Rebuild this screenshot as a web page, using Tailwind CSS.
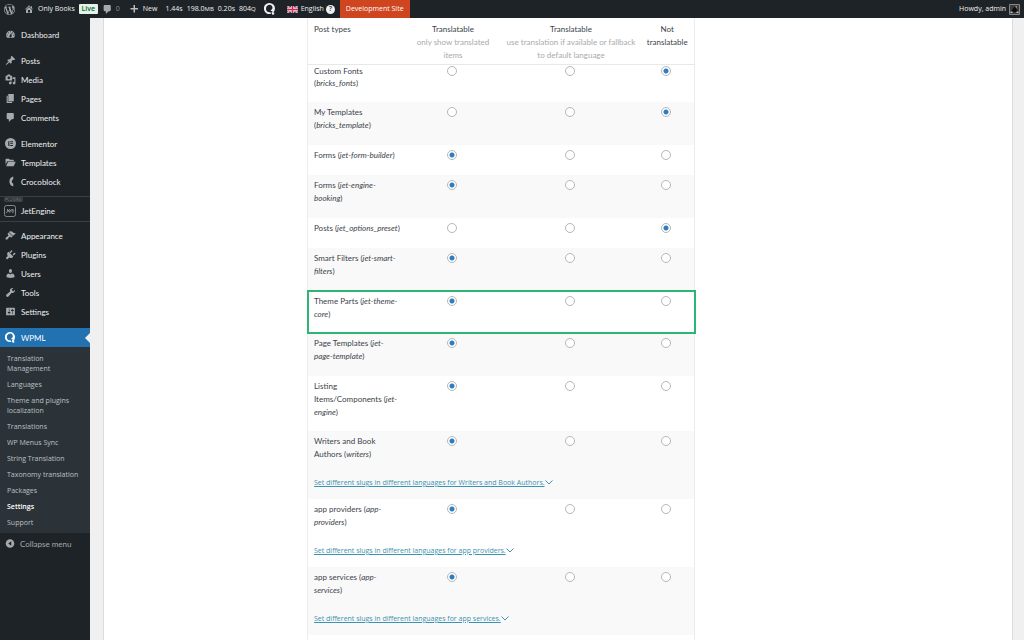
<!DOCTYPE html>
<html lang="en">
<head>
<meta charset="utf-8">
<title>WPML Settings</title>
<script src="https://cdn.jsdelivr.net/npm/@tailwindcss/browser@4"></script>
</head>
<body class="flex h-screen flex-col overflow-hidden bg-[#f0f0f1] font-['Open_Sans','Noto_Sans',sans-serif] text-[7px] text-[#3c434a]">

<!-- Admin bar -->
<header class="flex h-[18px] shrink-0 items-center bg-[#1d2327] text-[#f0f0f1]">
  <a href="#" aria-label="About WordPress" class="ml-1 text-[#a7aaad]"><svg class="size-[11px]" viewBox="0 0 20 20" fill="currentColor"><path d="M20 10c0-5.51-4.49-10-10-10C4.48 0 0 4.49 0 10c0 5.52 4.48 10 10 10 5.51 0 10-4.48 10-10zM7.78 15.37L4.37 6.22c.55-.02 1.17-.08 1.17-.08.5-.06.44-1.13-.06-1.11 0 0-1.45.11-2.37.11-.18 0-.37 0-.58-.01C4.12 2.69 6.87 1.11 10 1.11c2.33 0 4.45.87 6.05 2.34-.68-.11-1.65.39-1.65 1.58 0 .74.45 1.36.9 2.1.35.61.55 1.36.55 2.46 0 1.49-1.4 5-1.4 5l-3.03-8.37c.54-.02.82-.17.82-.17.5-.05.44-1.25-.06-1.22 0 0-1.44.12-2.38.12-.87 0-2.33-.12-2.33-.12-.5-.03-.56 1.2-.06 1.22l.92.08 1.26 3.41zM17.41 10c.24-.64.74-1.87.43-4.25.7 1.29 1.05 2.71 1.05 4.25 0 3.29-1.73 6.24-4.4 7.78.97-2.59 1.94-5.2 2.92-7.78zM6.1 18.09C3.12 16.65 1.11 13.53 1.11 10c0-1.3.23-2.48.72-3.59C3.25 10.3 4.67 14.2 6.1 18.09zm4.03-6.63l2.58 6.98c-.86.29-1.76.45-2.71.45-.79 0-1.57-.11-2.29-.33.81-2.38 1.62-4.74 2.42-7.1z"/></svg></a>
  <a href="#" class="ml-[9px] flex items-center gap-1"><svg class="size-[10px] text-[#a7aaad]" viewBox="0 0 20 20" fill="currentColor"><path d="M16 8.5l1.53 1.53-1.06 1.06L10 4.6l-6.47 6.49-1.06-1.06L10 2.5l4 4v-2h2v4zm-6-2.46l6 5.99V18H4v-5.97zM12 17v-5H8v5h4z"/></svg>Only Books</a>
  <span class="ml-1 flex h-[10px] w-[19px] items-center justify-center rounded-[1px] bg-[#e6f2e8] font-semibold text-[#00702c]">Live</span>
  <a href="#" class="ml-1 flex items-center gap-[3px] text-[#a7aaad]"><svg class="size-[11px]" viewBox="0 0 20 20" fill="currentColor"><path d="M5 2h9c1.1 0 2 .9 2 2v7c0 1.1-.9 2-2 2h-2l-5 5v-5H5c-1.100 0-2-.9-2-2V4c0-1.1.9-2 2-2z"/></svg><span class="text-[#8c8f94]">0</span></a>
  <a href="#" class="ml-[9px] flex items-center gap-1"><svg class="size-[10px] text-[#b9bcbf]" viewBox="0 0 20 20" fill="currentColor"><path d="M18 8v3h-6v6H9v-6H3V8h6V2h3v6z"/></svg>New</a>
  <a href="#" class="ml-2 flex items-baseline gap-1"><span>1.44s</span><span>198.0<span class="text-[6px]">MB</span></span><span>0.20s</span><span>804<span class="text-[6px]">Q</span></span></a>
  <a href="#" aria-label="WPML" class="ml-[8px]"><svg class="size-[12px]" viewBox="0 0 24 24" fill="#f0f0f1"><path fill-rule="evenodd" d="M11 0a11 11 0 1 0 3 21.500l-1-3Q5 19.500 4 12 4 4.500 11 3.500q6 .5 6 6.500 0 3-4 4.500 2 2.500 5 1.500-1.500 2-3 2.500l1.500 2.500Q22 17.500 22 11A11 11 0 0 0 11 0z"/><circle cx="18" cy="21" r="2.500"/></svg></a>
  <a href="#" class="ml-[11px] flex items-center gap-[2px]"><svg class="mr-[1px] h-[7px] w-[11px]" viewBox="0 0 22 14"><path fill="#233a8e" d="M0 0h22v14H0z"/><path stroke="#fff" stroke-width="3" d="m0 0 22 14M22 0 0 14"/><path stroke="#d22c45" stroke-width="1.500" d="m0 0 22 14M22 0 0 14"/><path stroke="#fff" stroke-width="5" d="M11 0v14M0 7h22"/><path stroke="#d22c45" stroke-width="3" d="M11 0v14M0 7h22"/></svg>English<span class="flex size-[9px] items-center justify-center rounded-full bg-[#f0f0f1] font-bold text-[#50575e]">?</span></a>
  <a href="#" class="ml-[5px] flex h-full items-center bg-[#cf4520] px-[6px] text-white">Development Site</a>
  <a href="#" class="mr-1 ml-auto flex items-center gap-[3px]">Howdy, admin<svg class="size-[11px]" viewBox="0 0 22 22"><path fill="#3a3c3f" stroke="#85888b" stroke-width="2" d="M1 1h20v20H1z"/><path fill="#0c0c0c" d="m3 16 8-11 8 11z"/><path fill="#b88a6c" d="M12 4h4v5z"/><path fill="#c8c8c8" d="M3 15h4v3H3zm12 0h4v3h-4z"/></svg></a>
</header>

<div class="flex min-h-0 flex-1">
  <!-- Admin menu -->
  <nav class="w-[90px] shrink-0 bg-[#1d2327] pt-[7px] font-['Lato',sans-serif] text-[8px] text-[#f0f0f1]">
    <a href="#" class="flex h-[19px] items-center gap-[5px] pl-[5px]"><svg class="size-[11px] text-[#a7aaad]" viewBox="0 0 20 20" fill="currentColor"><path d="M3.760 16h12.480c1.100-1.370 1.760-3.110 1.760-5 0-4.420-3.580-8-8-8s-8 3.580-8 8c0 1.890.66 3.630 1.760 5zM10 4c.55 0 1 .45 1 1s-.45 1-1 1-1-.45-1-1 .45-1 1-1zM6 6c.55 0 1 .45 1 1s-.45 1-1 1-1-.45-1-1 .45-1 1-1zm8 0c.55 0 1 .45 1 1s-.45 1-1 1-1-.45-1-1 .45-1 1-1zm-5.370 5.550L12 7v6c0 1.100-.9 2-2 2s-2-.9-2-2c0-.57.24-1.080.63-1.450zM4 10c.55 0 1 .45 1 1s-.45 1-1 1-1-.45-1-1 .45-1 1-1zm12 0c.55 0 1 .45 1 1s-.45 1-1 1-1-.45-1-1 .45-1 1-1z"/></svg>Dashboard</a>

    <div class="mt-[7px]">
      <a href="#" class="flex h-[19px] items-center gap-[5px] pl-[5px]"><svg class="size-[11px] text-[#a7aaad]" viewBox="0 0 20 20" fill="currentColor"><path d="M10.440 3.020l1.820-1.820 6.360 6.350-1.830 1.820c-1.050-.68-2.480-.57-3.410.36l-.75.75c-.92.93-1.040 2.350-.35 3.410l-1.830 1.820-2.410-2.410-2.800 2.790c-.42.42-3.380 2.710-3.800 2.290s1.860-3.390 2.280-3.810l2.790-2.790L4.100 9.360l1.830-1.820c1.050.69 2.480.57 3.400-.36l.75-.75c.93-.92 1.050-2.350.36-3.410z"/></svg>Posts</a>
      <a href="#" class="flex h-[19px] items-center gap-[5px] pl-[5px]"><svg class="size-[11px] text-[#a7aaad]" viewBox="0 0 20 20" fill="currentColor"><path d="M13 11V4c0-.55-.45-1-1-1h-1.670L9 1H5L3.670 3H2c-.55 0-1 .45-1 1v7c0 .55.45 1 1 1h10c.55 0 1-.45 1-1zM7 4.500c1.380 0 2.500 1.120 2.500 2.500S8.380 9.500 7 9.500 4.500 8.380 4.500 7 5.620 4.500 7 4.500zM14 6h5v10.500c0 1.380-1.120 2.500-2.500 2.500S14 17.880 14 16.500s1.120-2.500 2.500-2.500c.17 0 .34.02.5.05V9h-3V6zm-4 8.050V13h2v3.500c0 1.380-1.120 2.500-2.500 2.500S7 17.880 7 16.500 8.120 14 9.500 14c.17 0 .34.02.5.05z"/></svg>Media</a>
      <a href="#" class="flex h-[19px] items-center gap-[5px] pl-[5px]"><svg class="size-[11px] text-[#a7aaad]" viewBox="0 0 20 20" fill="currentColor"><path d="M6 15V2h10v13H6zm-1 1h8v2H3V5h2v11z"/></svg>Pages</a>
      <a href="#" class="flex h-[19px] items-center gap-[5px] pl-[5px]"><svg class="size-[11px] text-[#a7aaad]" viewBox="0 0 20 20" fill="currentColor"><path d="M5 2h9c1.100 0 2 .9 2 2v7c0 1.100-.9 2-2 2h-2l-5 5v-5H5c-1.100 0-2-.9-2-2V4c0-1.100.9-2 2-2z"/></svg>Comments</a>
    </div>

    <div class="mt-[7px]">
      <a href="#" class="flex h-[19px] items-center gap-[5px] pl-[5px]"><svg class="size-[11px]" viewBox="0 0 20 20"><circle cx="10" cy="10" r="10" fill="#a7aaad"/><path fill="#1d2327" d="M6 6h2v8.500H6zm3.500 0h5v1.700h-5zm0 3.400h5v1.700h-5zm0 3.400h5v1.700h-5z"/></svg>Elementor</a>
      <a href="#" class="flex h-[19px] items-center gap-[5px] pl-[5px]"><svg class="size-[11px] text-[#a7aaad]" viewBox="0 0 20 20" fill="currentColor"><path d="M1 14V4q0-1 1-1h5l2 2h6q1 0 1 1v1.500H5q-1 0-1.500 1zm1 3 3-7q.4-1.500 1.500-1.500h13l-3.300 7.500q-.4 1-1.500 1z"/></svg>Templates</a>
      <a href="#" class="flex h-[19px] items-center gap-[5px] pl-[5px]"><svg class="size-[11px] text-[#a7aaad]" viewBox="0 0 20 20" fill="currentColor"><path d="M15 1v5a4.300 4.300 0 0 0 0 8v5A9.300 9.300 0 0 1 15 1z"/></svg>Crocoblock</a>
    </div>

    <div class="mt-[5px] border-y border-[#3a4046] pb-[2px]">
      <span class="ml-1 flex h-[5px] w-[19px] items-center justify-center rounded-[1px] border border-[#3a4046] text-[4px] leading-none text-[#8c8f94]">PLUGINS</span>
      <a href="#" class="flex h-[17px] items-center gap-[5px] pl-1"><svg class="size-[12px]" viewBox="0 0 24 24" fill="none" stroke="#a7aaad"><rect x="1" y="1" width="22" height="22" rx="4" stroke-width="1.500"/><path stroke-width="1.500" d="M7 8v5q0 2-3 2m5-3h4q0-3-2-3t-2 3q0 3 4 2m3-6v5q0 2 3 2m-4-5h4q2 0 0 3"/></svg>JetEngine</a>
    </div>

    <div class="mt-[4px]">
      <a href="#" class="flex h-[19px] items-center gap-[5px] pl-[5px]"><svg class="size-[11px] text-[#a7aaad]" viewBox="0 0 20 20" fill="currentColor"><path d="M14.480 11.060L7.410 3.990l1.500-1.500c.5-.56 2.300-.47 3.510.32 1.210.8 1.430 1.280 2.910 2.100 1.180.64 2.450 1.260 4.450.85zm-.71.71L6.700 4.700 4.930 6.470c-.39.39-.39 1.020 0 1.410l1.060 1.060c.39.39.39 1.030 0 1.420-.6.6-1.430 1.110-2.210 1.690-.35.26-.7.53-1.010.84C1.430 14.230.4 16.080 1.400 17.070c.99 1 2.840-.03 4.180-1.360.31-.31.58-.66.85-1.020.57-.78 1.080-1.610 1.690-2.210.39-.39 1.020-.39 1.410 0l1.060 1.060c.39.39 1.020.39 1.410 0z"/></svg>Appearance</a>
      <a href="#" class="flex h-[19px] items-center gap-[5px] pl-[5px]"><svg class="size-[11px] text-[#a7aaad]" viewBox="0 0 20 20" fill="currentColor"><path d="M13.100 4.400 9.900 7.600 8 5.700l3.200-3.200c.4-.3 1.100-.2 1.600.3s.7 1.200.3 1.600zM6.300 5l8.800 8.800-1.500 1.500c-1.300 1.300-4.200 1.600-6 .3L4 19l-2.600-2.600L5 12.700C3.600 10.700 3.400 8 4.800 6.500zm9.400 7L13.800 10 17 6.900c.4-.4 1.100-.2 1.600.3s.6 1.200.3 1.500z"/></svg>Plugins</a>
      <a href="#" class="flex h-[19px] items-center gap-[5px] pl-[5px]"><svg class="size-[11px] text-[#a7aaad]" viewBox="0 0 20 20" fill="currentColor"><path d="M10 9.250c-2.270 0-2.730-3.440-2.730-3.440C7 4.020 7.820 2 9.970 2c2.160 0 2.980 2.020 2.710 3.810 0 0-.41 3.440-2.680 3.440zm0 2.570L12.720 10c2.390 0 4.520 2.330 4.520 4.530v2.490s-3.650 1.130-7.240 1.130c-3.650 0-7.240-1.130-7.240-1.130v-2.490c0-2.250 1.940-4.480 4.470-4.480z"/></svg>Users</a>
      <a href="#" class="flex h-[19px] items-center gap-[5px] pl-[5px]"><svg class="size-[11px] text-[#a7aaad]" viewBox="0 0 20 20" fill="currentColor"><path d="M16.680 9.770c-1.340 1.340-3.300 1.670-4.950.99l-5.410 6.520c-.99.99-2.590.99-3.580 0s-.99-2.590 0-3.570l6.520-5.420c-.68-1.650-.35-3.610.99-4.950 1.280-1.280 3.120-1.620 4.720-1.060l-2.890 2.890 2.820 2.820 2.860-2.870c.53 1.580.18 3.390-1.080 4.650z"/></svg>Tools</a>
      <a href="#" class="flex h-[19px] items-center gap-[5px] pl-[5px]"><svg class="size-[11px] text-[#a7aaad]" viewBox="0 0 20 20" fill="currentColor"><path d="M18 16V4c0-.55-.45-1-1-1H3c-.55 0-1 .45-1 1v12c0 .55.45 1 1 1h14c.55 0 1-.45 1-1zM8 11h1c.55 0 1 .45 1 1s-.45 1-1 1H8v1.500c0 .28-.22.5-.5.5s-.5-.22-.5-.5V13H6c-.55 0-1-.45-1-1s.45-1 1-1h1V5.500c0-.28.22-.5.5-.5s.5.22.5.5V11zm5-2h-1c-.55 0-1-.45-1-1s.45-1 1-1h1V5.500c0-.28.22-.5.5-.5s.5.22.5.5V7h1c.55 0 1 .45 1 1s-.45 1-1 1h-1v5.500c0 .28-.22.5-.5.5s-.5-.22-.5-.5V9z"/></svg>Settings</a>
    </div>

    <a href="#" class="mt-[7px] flex h-[19px] items-center gap-[5px] bg-[#2271b1] pl-[5px] text-white"><svg class="size-[11px]" viewBox="0 0 24 24" fill="#fff"><path fill-rule="evenodd" d="M11 0a11 11 0 1 0 3 21.500l-1-3Q5 19.500 4 12 4 4.500 11 3.500q6 .5 6 6.500 0 3-4 4.500 2 2.500 5 1.500-1.500 2-3 2.500l1.500 2.500Q22 17.500 22 11A11 11 0 0 0 11 0z"/><circle cx="18" cy="21" r="2.500"/></svg>WPML<svg class="ml-auto h-[10px] w-[5px]" viewBox="0 0 5 10"><path fill="#f0f0f1" d="M5 0v10L0 5z"/></svg></a>
    <ul class="bg-[#2c3338] pt-[4px] pb-[2px] font-['Open_Sans',sans-serif] text-[7px] leading-[10px] text-[#bcc0c3]">
      <li><a href="#" class="block px-[7px] py-[3px]">Translation<br>Management</a></li>
      <li><a href="#" class="block px-[7px] py-[3px]">Languages</a></li>
      <li><a href="#" class="block px-[7px] py-[3px]">Theme and plugins<br>localization</a></li>
      <li><a href="#" class="block px-[7px] py-[3px]">Translations</a></li>
      <li><a href="#" class="block px-[7px] py-[3px]">WP Menus Sync</a></li>
      <li><a href="#" class="block px-[7px] py-[3px]">String Translation</a></li>
      <li><a href="#" class="block px-[7px] py-[3px] whitespace-nowrap">Taxonomy translation</a></li>
      <li><a href="#" class="block px-[7px] py-[3px]">Packages</a></li>
      <li><a href="#" class="block px-[7px] py-[3px] font-semibold text-white">Settings</a></li>
      <li><a href="#" class="block px-[7px] py-[3px]">Support</a></li>
    </ul>
    <button type="button" class="flex h-[22px] w-full items-center gap-[5px] pl-[5px] text-[#a7aaad]"><svg class="size-[10px]" viewBox="0 0 20 20"><circle cx="10" cy="9" r="8.500" fill="#a7aaad"/><path fill="#1d2327" d="M12.500 4.500v9L6.500 9z"/></svg>Collapse menu</button>
  </nav>

  <!-- Settings panel -->
  <main class="mr-[11px] ml-[13px] flex-1 overflow-hidden border-x border-[#dcdcde] bg-white pl-[203px]">
    <table class="w-[387px] table-fixed border-collapse border-x border-[#ececec] font-['Lato',sans-serif] text-[8px] text-[#3c434a]">
      <colgroup><col class="w-[97px]"><col class="w-[97px]"><col class="w-[139px]"><col class="w-[54px]"></colgroup>
      <thead>
        <tr class="h-[46px] border-b border-[#e8e8e8] align-top leading-[13px]">
          <th scope="col" class="pt-[5px] pl-[6px] text-left font-normal">Post types</th>
          <th scope="col" class="px-1 pt-[5px] font-normal">Translatable<br><span class="text-[#a7aaad]">only show translated<br>items</span></th>
          <th scope="col" class="pt-[5px] font-normal whitespace-nowrap">Translatable<br><span class="text-[#a7aaad]">use translation if available or fallback<br>to default language</span></th>
          <th scope="col" class="pt-[5px] font-normal">Not<br>translatable</th>
        </tr>
      </thead>
      <tbody id="post-types"></tbody>
    </table>
  </main>
</div>

<script>
  // [name html, selected column, row classes, slug link target]
  const rows = [
    ["Custom Fonts<br>(<i>bricks_fonts</i>)", 2, "h-[38px] align-top leading-[12px]", ""],
    ["My Templates<br>(<i>bricks_template</i>)", 2, "h-[43px] bg-[#f9f9f9] align-top leading-[13px]", ""],
    ["Forms (<i>jet-form-builder</i>)", 0, "h-[30px] align-top leading-[13px]", ""],
    ["Forms (<i>jet-engine-<br>booking</i>)", 0, "h-[43px] bg-[#f9f9f9] align-top leading-[13px]", ""],
    ["Posts (<i>jet_options_preset</i>)", 2, "h-[30px] align-top leading-[13px]", ""],
    ["Smart Filters (<i>jet-smart-<br>filters</i>)", 0, "h-[43px] bg-[#f9f9f9] align-top leading-[13px]", ""],
    ["Theme Parts (<i>jet-theme-<br>core</i>)", 0, "h-[42px] align-top leading-[13px] outline-2 -outline-offset-1 outline-[#2bb673]", ""],
    ["Page Templates (<i>jet-<br>page-template</i>)", 0, "h-[43px] bg-[#f9f9f9] align-top leading-[13px]", ""],
    ["Listing<br>Items/Components (<i>jet-<br>engine</i>)", 0, "h-[55px] align-top leading-[13px]", ""],
    ["Writers and Book<br>Authors (<i>writers</i>)", 0, "h-[41px] bg-[#f9f9f9] align-top leading-[13px]", "Writers and Book Authors"],
    ["app providers (<i>app-<br>providers</i>)", 0, "h-[41px] align-top leading-[13px]", "app providers"],
    ["app services (<i>app-<br>services</i>)", 0, "h-[41px] bg-[#f9f9f9] align-top leading-[13px]", "app services"],
    ["", -1, "h-[43px] align-top", ""]
  ];
  const columns = ["Translatable, only show translated items", "Translatable, use fallback", "Not translatable"];
  document.getElementById("post-types").innerHTML = rows.map(([name, selected, cls, slug], r) => {
    const pad = r === 0 ? "pt-0" : "pt-1";
    const radios = selected < 0 ? '<td colspan="3"></td>' : columns.map((label, c) =>
      `<td class="${pad} pr-[2px] text-center"><input type="radio" name="type-${r}" aria-label="${label}" ${c === selected ? "checked" : ""} class="block mx-auto mt-[1px] size-[10px] appearance-none rounded-full border border-[#b4b7ba] bg-white checked:bg-[radial-gradient(circle,#2f7cc0_2px,#ffffff_3px)]"></td>`).join("");
    const link = slug ? `<tr class="h-[27px] align-top leading-[13px] ${cls.includes("bg-[#f9f9f9]") ? "bg-[#f9f9f9]" : "bg-white"}"><td colspan="4" class="pt-1 pl-[6px]"><a href="#" class="inline-flex items-center font-['Open_Sans',sans-serif] text-[7px] text-[#3a93b0]"><span class="underline">Set different slugs in different languages for ${slug}.</span><svg class="h-[5px] w-[8px]" viewBox="0 0 16 10" fill="none" stroke="currentColor" stroke-width="2"><path d="m1 1 7 7 7-7"/></svg></a></td></tr>` : "";
    return `<tr class="${cls}"><td class="${pad} pl-[6px] whitespace-nowrap">${name}</td>${radios}</tr>${link}`;
  }).join("");
</script>
</body>
</html>
